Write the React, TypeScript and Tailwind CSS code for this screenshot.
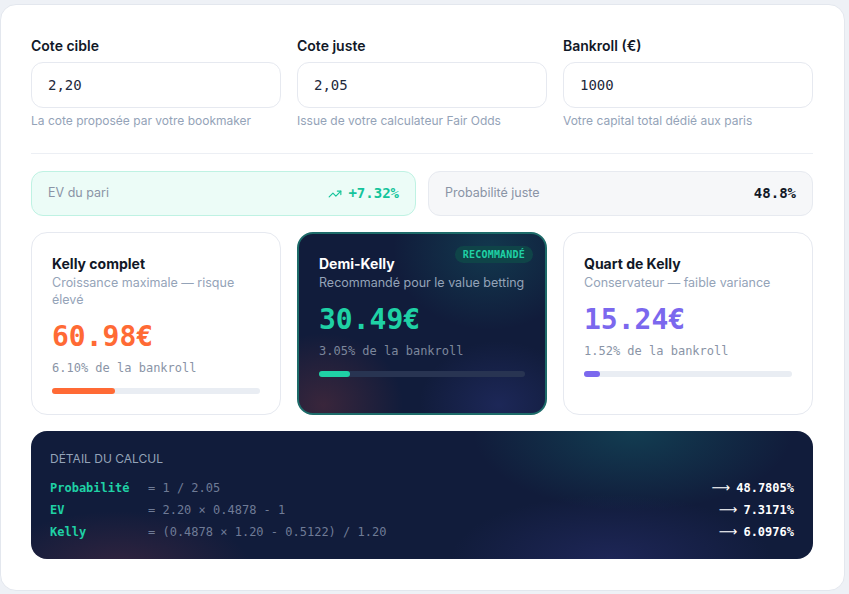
import { TrendingUp } from "lucide-react";

const mono = "font-['DejaVu_Sans_Mono',monospace]";

const fields = [
  { label: "Cote cible", value: "2,20", hint: "La cote proposée par votre bookmaker" },
  { label: "Cote juste", value: "2,05", hint: "Issue de votre calculateur Fair Odds" },
  { label: "Bankroll (€)", value: "1000", hint: "Votre capital total dédié aux paris" },
];

const rows = [
  { label: "Probabilité", formula: "= 1 / 2.05", result: "48.7805%" },
  { label: "EV", formula: "= 2.20 × 0.4878 - 1", result: "7.3171%" },
  { label: "Kelly", formula: "= (0.4878 × 1.20 - 0.5122) / 1.20", result: "6.0976%" },
];

function Field({ label, value, hint }: { label: string; value: string; hint: string }) {
  return (
    <div className="flex flex-col">
      <label className="text-[14px] font-semibold leading-5 text-[#111827]">{label}</label>
      <div className={`mt-[6px] flex h-[46px] items-center rounded-xl border border-[#e6e9f0] bg-white px-4 text-[14px] text-[#1e293b] ${mono}`}>
        {value}
      </div>
      <p className="mt-[5px] text-[12px] leading-4 text-[#94a3b8]">{hint}</p>
    </div>
  );
}

function KellyCard({
  title,
  subtitle,
  amount,
  pct,
  color,
  fill,
  width,
}: {
  title: string;
  subtitle: string;
  amount: string;
  pct: string;
  color: string;
  fill: string;
  width: number;
}) {
  return (
    <div className="rounded-2xl border border-[#e6e9f0] bg-white px-5 pb-5 pt-[21px]">
      <h3 className="text-[14px] font-bold leading-5 text-[#111827]">{title}</h3>
      <p className="text-[12.5px] leading-[17px] text-[#94a3b8]">{subtitle}</p>
      <div className={`mt-3 text-[28px] font-bold leading-[34px] ${color} ${mono}`}>{amount}</div>
      <div className={`mt-[6px] text-[12px] leading-4 text-[#8a94a6] ${mono}`}>{pct}</div>
      <div className="mt-3 h-[6px] w-full rounded-full bg-[#e9edf3]">
        <div className={`h-full rounded-full ${fill}`} style={{ width: `${width}%` }} />
      </div>
    </div>
  );
}

export default function App() {
  return (
    <div className="min-h-screen bg-[#eef1f6] pb-1 pr-1 pt-1 font-['Inter',sans-serif]">
      <div className="w-[845px] rounded-2xl border border-[#e3e7ee] bg-white pb-[31px] pl-[30px] pr-[31px] pt-[31px]">
        <div className="grid grid-cols-3 gap-4">
          {fields.map((f) => (
            <Field key={f.label} {...f} />
          ))}
        </div>

        <div className="mt-[24px] h-px bg-[#eceff4]" />

        <div className="mt-[17px] grid grid-cols-2 gap-3">
          <div className="flex h-[45px] items-center justify-between rounded-xl border border-[#bff2e3] bg-[#ecfcf7] px-4">
            <span className="text-[12.5px] text-[#8a94a6]">EV du pari</span>
            <span className={`flex items-center gap-[6px] text-[14px] font-bold text-[#14c49b] ${mono}`}>
              <TrendingUp className="h-[14px] w-[14px]" strokeWidth={2} />
              +7.32%
            </span>
          </div>
          <div className="flex h-[45px] items-center justify-between rounded-xl border border-[#e7eaf0] bg-[#f6f7f9] px-4">
            <span className="text-[12.5px] text-[#8a94a6]">Probabilité juste</span>
            <span className={`text-[14px] font-bold text-[#111827] ${mono}`}>48.8%</span>
          </div>
        </div>

        <div className="mt-4 grid grid-cols-3 gap-4">
          <KellyCard
            title="Kelly complet"
            subtitle="Croissance maximale — risque élevé"
            amount="60.98€"
            pct="6.10% de la bankroll"
            color="text-[#ff6a35]"
            fill="bg-[#ff6a35]"
            width={30.5}
          />

          <div className="relative overflow-hidden rounded-2xl border-2 border-[#1d6b69] bg-[#111c3b] px-5 pb-5 pt-5">
            <div className="pointer-events-none absolute -right-10 -top-16 h-40 w-48 rounded-full bg-[radial-gradient(closest-side,rgba(20,120,120,0.3),transparent)]" />
            <div className="pointer-events-none absolute -bottom-16 -left-14 h-36 w-40 rounded-full bg-[radial-gradient(closest-side,rgba(150,60,60,0.3),transparent)]" />
            <div className="pointer-events-none absolute -bottom-14 left-[120px] h-32 w-40 rounded-full bg-[radial-gradient(closest-side,rgba(50,60,140,0.35),transparent)]" />
            <span className={`absolute right-[12px] top-[12px] rounded-full bg-[#0f4448] px-2 py-[2px] text-[10px] font-bold leading-[13px] tracking-[0.02em] text-[#1fd1a5] ${mono}`}>
              RECOMMANDÉ
            </span>
            <div className="relative">
              <h3 className="text-[14px] font-bold leading-5 text-white">Demi-Kelly</h3>
              <p className="text-[12.5px] leading-[17px] text-[#94a3b8]">Recommandé pour le value betting</p>
              <div className={`mt-3 text-[28px] font-bold leading-[34px] text-[#1fd1a5] ${mono}`}>30.49€</div>
              <div className={`mt-[6px] text-[12px] leading-4 text-[#7d879c] ${mono}`}>3.05% de la bankroll</div>
              <div className="mt-3 h-[6px] w-full rounded-full bg-[#283452]">
                <div className="h-full rounded-full bg-[#1fd1a5]" style={{ width: "15.25%" }} />
              </div>
            </div>
          </div>

          <KellyCard
            title="Quart de Kelly"
            subtitle="Conservateur — faible variance"
            amount="15.24€"
            pct="1.52% de la bankroll"
            color="text-[#7b68ee]"
            fill="bg-[#7b68ee]"
            width={7.6}
          />
        </div>

        <div className="relative mt-4 overflow-hidden rounded-2xl bg-[#111c3b] px-[19px] pb-4 pt-5">
          <div className="pointer-events-none absolute -top-20 right-[20px] h-40 w-[320px] rounded-full bg-[radial-gradient(closest-side,rgba(20,110,115,0.4),transparent)]" />
          <div className="pointer-events-none absolute -bottom-16 left-[420px] h-32 w-[320px] rounded-full bg-[radial-gradient(closest-side,rgba(45,50,120,0.45),transparent)]" />
          <div className="pointer-events-none absolute -bottom-16 -left-10 h-28 w-[260px] rounded-full bg-[radial-gradient(closest-side,rgba(110,50,70,0.35),transparent)]" />
          <div className="relative">
            <div className="text-[12px] uppercase leading-4 text-[#94a3b8]">Détail du calcul</div>
            <div className="mt-[10px]">
              {rows.map((r) => (
                <div key={r.label} className={`flex items-center text-[12px] leading-[22px] ${mono}`}>
                  <span className="w-[98px] font-bold text-[#1fd1a5]">{r.label}</span>
                  <span className="flex-1 text-[#6f7b96]">{r.formula}</span>
                  <span className="flex items-center gap-[6px] font-bold text-white">
                    <span className="font-['DejaVu_Sans',sans-serif] text-[13px] font-normal leading-[22px]">⟶</span>
                    {r.result}
                  </span>
                </div>
              ))}
            </div>
          </div>
        </div>
      </div>
    </div>
  );
}
